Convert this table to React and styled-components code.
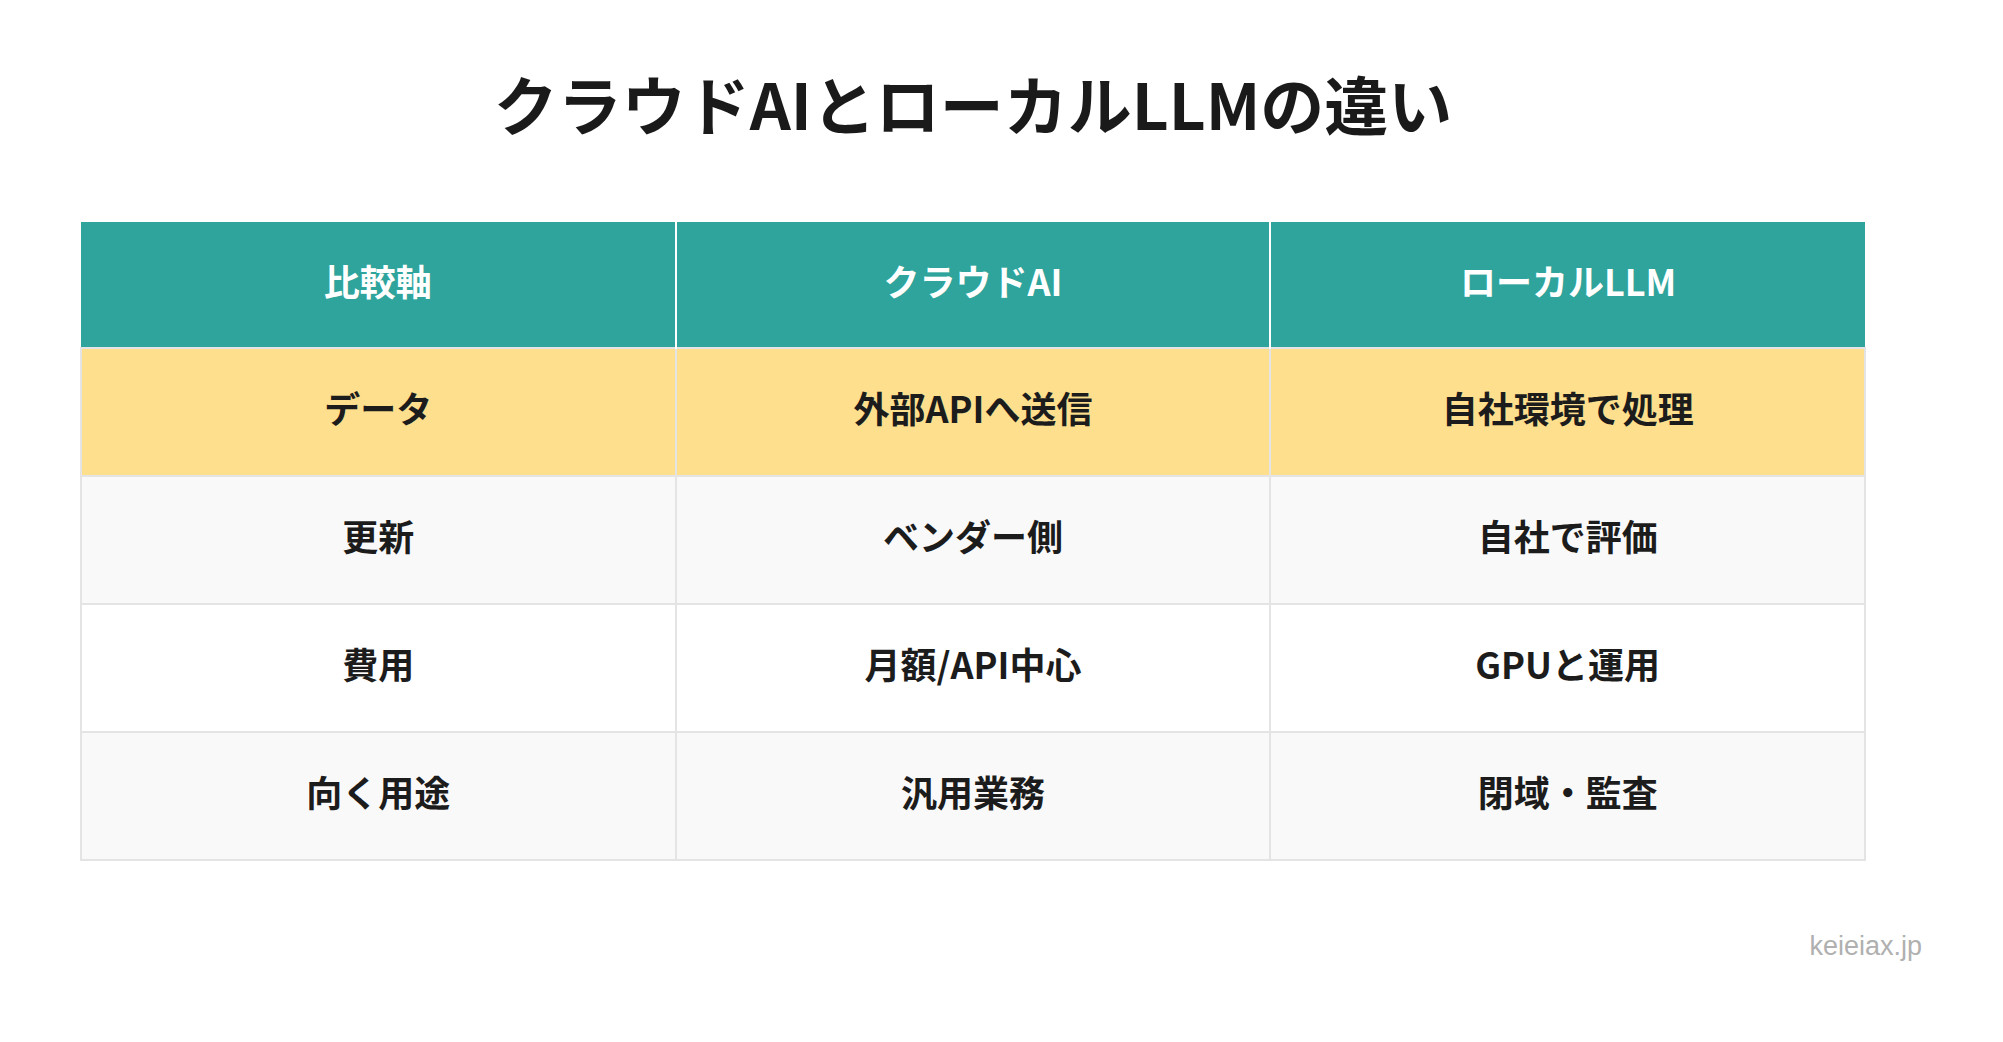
import React from "react";
import styled, { createGlobalStyle } from "styled-components";

const GlobalStyle = createGlobalStyle`
  html, body {
    margin: 0;
    padding: 0;
    background: #ffffff;
  }
  body {
    font-family: "Noto Sans CJK JP", "Noto Sans", "Liberation Sans", sans-serif;
    color: #1c1c1c;
  }
`;

const Page = styled.div`
  width: 2003px;
  min-height: 1042px;
  box-sizing: border-box;
  padding-top: 62px;
  display: flex;
  flex-direction: column;
`;

const Content = styled.div`
  width: 1786px;
  margin-left: 80px;
  display: flex;
  flex-direction: column;
  align-items: center;
`;

const Title = styled.h1`
  margin: 0;
  font-size: 64px;
  line-height: 80px;
  font-weight: 700;
  color: #1a1a1a;
`;

const Table = styled.table`
  margin-top: 80px;
  width: 100%;
  table-layout: fixed;
  border-collapse: collapse;
`;

const HeadCell = styled.th`
  height: 115px;
  padding: 0 0 10px;
  background: #2ea49c;
  color: #ffffff;
  font-size: 36px;
  font-weight: 700;
  text-align: center;
  vertical-align: middle;
  border-left: 2px solid #ffffff;
  border-right: 2px solid #ffffff;

  &:first-child {
    border-left: none;
  }
  &:last-child {
    border-right: none;
  }
`;

const Row = styled.tr`
  background: ${(p) => (p.$highlight ? "#fddf8d" : p.$alt ? "#f9f9f9" : "#ffffff")};
`;

const Cell = styled.td`
  height: 116px;
  padding: 0 0 10px;
  font-size: 36px;
  font-weight: 700;
  text-align: center;
  vertical-align: middle;
  color: #1c1c1c;
  border: 2px solid #e4e4e4;
`;

const Footer = styled.div`
  align-self: flex-end;
  margin-top: 70px;
  margin-right: 81px;
  font-family: "Liberation Sans", "Noto Sans", sans-serif;
  font-size: 27px;
  color: #b0b0b0;
`;

const head = ["比較軸", "クラウドAI", "ローカルLLM"];

const rows = [
  ["データ", "外部APIへ送信", "自社環境で処理"],
  ["更新", "ベンダー側", "自社で評価"],
  ["費用", "月額/API中心", "GPUと運用"],
  ["向く用途", "汎用業務", "閉域・監査"],
];

const App = () => {
  return (
    <Page>
      <GlobalStyle />
      <Content>
        <Title>クラウドAIとローカルLLMの違い</Title>
        <Table>
          <thead>
            <tr>
              {head.map((h) => (
                <HeadCell key={h}>{h}</HeadCell>
              ))}
            </tr>
          </thead>
          <tbody>
            {rows.map((r, i) => (
              <Row key={r[0]} $highlight={i === 0} $alt={i % 2 === 1}>
                {r.map((c) => (
                  <Cell key={c}>{c}</Cell>
                ))}
              </Row>
            ))}
          </tbody>
        </Table>
      </Content>
      <Footer>keieiax.jp</Footer>
    </Page>
  );
};

export default App;
